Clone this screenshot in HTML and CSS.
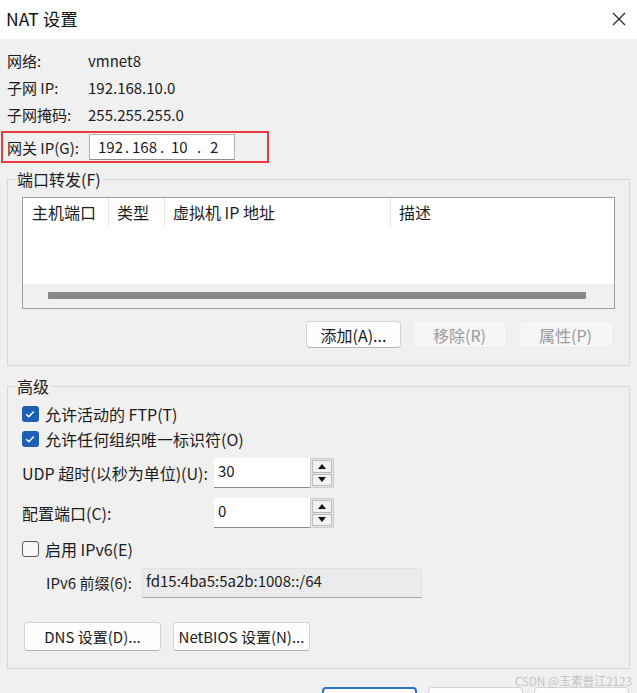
FILE: index.html
```html
<!DOCTYPE html>
<html lang="zh-CN">
<head>
<meta charset="utf-8">
<title>NAT 设置</title>
<link rel="stylesheet" href="styles.css">
</head>
<body>
<div class="dialog">
  <header class="titlebar">
    <span class="title">NAT 设置</span>
    <svg class="close" width="14" height="14" viewBox="0 0 14 14"><path d="M1 1L13 13M13 1L1 13" stroke="#2b2b2b" stroke-width="1.3" fill="none"/></svg>
  </header>
  <main class="content">
    <div class="row"><span class="lbl">网络:</span><span class="val">vmnet8</span></div>
    <div class="row"><span class="lbl">子网 IP:</span><span class="val">192.168.10.0</span></div>
    <div class="row"><span class="lbl">子网掩码:</span><span class="val">255.255.255.0</span></div>
    <div class="gw">
      <span class="gwlbl">网关 IP(G):</span>
      <div class="ipbox">
        <span>192</span><span>.</span><span>168</span><span>.</span><span>10</span><span>.</span><span>2</span>
      </div>
    </div>

    <fieldset class="group pf">
      <legend>端口转发(F)</legend>
      <div class="table">
        <div class="thead">
          <div class="th first">主机端口</div>
          <div class="th">类型</div>
          <div class="th">虚拟机 IP 地址</div>
          <div class="th">描述</div>
        </div>
        <div class="tbody"></div>
        <div class="hscroll"><div class="thumb"></div></div>
      </div>
      <div class="btnrow">
        <button class="btn">添加(A)...</button>
        <button class="btn disabled">移除(R)</button>
        <button class="btn disabled">属性(P)</button>
      </div>
    </fieldset>

    <fieldset class="group adv">
      <legend>高级</legend>
      <div class="check">
        <span class="box on"><svg width="16" height="16" viewBox="0 0 16 16"><path d="M4.2 8.3L6.8 10.8L11.8 5.4" stroke="#fff" stroke-width="1.4" fill="none"/></svg></span>
        <span>允许活动的 FTP(T)</span>
      </div>
      <div class="check">
        <span class="box on"><svg width="16" height="16" viewBox="0 0 16 16"><path d="M4.2 8.3L6.8 10.8L11.8 5.4" stroke="#fff" stroke-width="1.4" fill="none"/></svg></span>
        <span>允许任何组织唯一标识符(O)</span>
      </div>
      <div class="spinrow udp">
        <span class="slbl">UDP 超时(以秒为单位)(U):</span>
        <div class="spin">
          <div class="sfield">30</div>
          <div class="arrows">
            <div class="arrow"><svg width="8" height="5" viewBox="0 0 8 5"><path d="M0 5L4 0L8 5Z" fill="#111"/></svg></div>
            <div class="arrow"><svg width="8" height="5" viewBox="0 0 8 5"><path d="M0 0L8 0L4 5Z" fill="#111"/></svg></div>
          </div>
        </div>
      </div>
      <div class="spinrow cfg">
        <span class="slbl">配置端口(C):</span>
        <div class="spin">
          <div class="sfield">0</div>
          <div class="arrows">
            <div class="arrow"><svg width="8" height="5" viewBox="0 0 8 5"><path d="M0 5L4 0L8 5Z" fill="#111"/></svg></div>
            <div class="arrow"><svg width="8" height="5" viewBox="0 0 8 5"><path d="M0 0L8 0L4 5Z" fill="#111"/></svg></div>
          </div>
        </div>
      </div>
      <div class="check v6">
        <span class="box off"></span>
        <span>启用 IPv6(E)</span>
      </div>
      <div class="prefixrow">
        <span class="plbl">IPv6 前缀(6):</span>
        <div class="pfield">fd15:4ba5:5a2b:1008::/64</div>
      </div>
      <div class="dnsrow">
        <button class="btn wide">DNS 设置(D)...</button>
        <button class="btn wide">NetBIOS 设置(N)...</button>
      </div>
    </fieldset>
  </main>
  <footer class="actions">
    <button class="btn foot primary" aria-label="确定"></button>
    <button class="btn foot" aria-label="取消"></button>
    <button class="btn foot" aria-label="帮助"></button>
  </footer>
  <div class="watermark">CSDN @玉素普江2123</div>
</div>
</body>
</html>
```

FILE: styles.css
```css
* { box-sizing: border-box; }
html, body { margin: 0; padding: 0; }
body {
  width: 637px;
  height: 693px;
  overflow: hidden;
  background: #f0f0f0;
  font-family: "Noto Sans CJK SC", "Noto Sans", sans-serif;
  color: #1c1c1c;
}
.dialog { position: relative; height: 693px; }

.titlebar {
  height: 39px;
  background: #ffffff;
  display: flex;
  align-items: center;
  justify-content: space-between;
  padding: 0 11px 2px 6px;
}
.title { font-size: 17.5px; line-height: 20px; color: #111; }
.close { display: block; }

.content { padding: 8px 7px 0; }

.row {
  display: flex;
  align-items: center;
  height: 27px;
  font-size: 15px;
  line-height: 20px;
}
.lbl { width: 81px; }

.gw {
  margin: 3px 0 0 -6px;
  width: 268px;
  height: 32px;
  border: 2px solid #ea3a3f;
  display: flex;
  align-items: center;
  padding-left: 4px;
  font-size: 15px;
}
.gwlbl { width: 82px; }
.ipbox {
  width: 146px;
  height: 26px;
  background: #fff;
  border: 1px solid #b4b4b4;
  border-bottom-color: #8d8d8d;
  display: grid;
  grid-template-columns: 27px 7px 28px 11px 26px 13px 1fr;
  align-items: center;
  padding-left: 8px;
  font-size: 15px;
  line-height: 20px;
}

.group {
  margin: 6px 0 0;
  border: 1px solid #d6d6d6;
  min-width: 0;
}
.group legend {
  font-size: 16px;
  line-height: 20px;
  padding: 0 2px;
  margin-left: -7px;
}
.pf { padding: 8px 14px 17px; }

.table {
  height: 112px;
  border: 1px solid #9c9ca4;
  background: #fff;
  display: flex;
  flex-direction: column;
}
.thead {
  display: grid;
  grid-template-columns: 85px 56px 226px 1fr;
  height: 29px;
  flex: none;
}
.th {
  font-size: 16px;
  line-height: 28px;
  padding-left: 8px;
  border-left: 1px solid #e6e6e6;
}
.th.first { border-left: none; padding-left: 9px; }
.tbody { flex: 1; }
.hscroll {
  height: 24px;
  flex: none;
  background: #f0f0f0;
  padding: 8px 28px 0 25px;
}
.thumb { height: 7px; background: #878787; border-radius: 1px; }

.btnrow {
  display: flex;
  justify-content: flex-end;
  gap: 11px;
  margin-top: 12px;
  padding-right: 2px;
}
.btn {
  font-family: inherit;
  font-size: 16px;
  color: #1c1c1c;
  width: 95px;
  height: 27px;
  padding: 0;
  background: #fdfdfd;
  border: 1px solid #d3d3d3;
  border-bottom-color: #b4b4b4;
  border-radius: 4px;
  display: flex;
  align-items: center;
  justify-content: center;
  line-height: 20px;
}
.btn.disabled {
  background: #f6f6f6;
  border-color: #ececec;
  color: #9c9c9c;
}

.adv { margin-top: 10px; padding: 5px 14px 17px; }

.check {
  display: flex;
  align-items: center;
  gap: 6px;
  height: 25px;
  font-size: 16px;
  line-height: 20px;
}
.box {
  width: 17px;
  height: 16px;
  border-radius: 3px;
  display: block;
  flex: none;
}
.box svg { display: block; }
.box.on { background: #1e5fb6; }
.box.off { border: 1.5px solid #5c5c5c; background: #f8f8f8; }

.spinrow {
  display: flex;
  align-items: center;
  height: 30px;
  font-size: 16px;
  line-height: 20px;
}
.udp { margin-top: 7px; }
.cfg { margin-top: 10px; }
.slbl { width: 192px; }
.spin { display: flex; height: 30px; }
.sfield {
  width: 96px;
  height: 30px;
  background: #fff;
  border-bottom: 1px solid #8a8a8a;
  padding: 3px 0 0 4px;
  font-size: 15px;
  line-height: 20px;
}
.arrows {
  width: 24px;
  height: 30px;
  border: 1px solid #cfcfcf;
  background: #e4e4e4;
  padding: 1px;
  display: flex;
  flex-direction: column;
  gap: 1px;
}
.arrow {
  flex: 1;
  background: #f1f1f1;
  border: 1px solid #bcbcbc;
  display: flex;
  align-items: center;
  justify-content: center;
}
.arrow svg { display: block; }

.v6 { margin-top: 8px; }

.prefixrow {
  display: flex;
  align-items: center;
  margin-top: 7px;
  height: 30px;
  font-size: 15px;
  line-height: 20px;
}
.plbl { margin-left: 24px; width: 96px; }
.pfield {
  width: 280px;
  height: 30px;
  background: #ebebeb;
  border: 1px solid #e2e2e2;
  border-bottom: 1px solid #a9a9a9;
  padding: 2px 0 0 3px;
}

.dnsrow {
  display: flex;
  gap: 12px;
  margin-top: 24px;
  padding-left: 2px;
}
.btn.wide { width: 137px; height: 29px; font-size: 15px; }

.actions {
  display: flex;
  justify-content: flex-end;
  gap: 11px;
  padding-right: 8px;
  margin-top: 18px;
}
.btn.foot { width: 95px; height: 30px; font-size: 15px; }
.btn.primary { border: 2px solid #2d74c9; }

.watermark {
  position: absolute;
  right: 5px;
  top: 673px;
  font-size: 12px;
  line-height: 16px;
  color: #c6c6c6;
  letter-spacing: -0.2px;
}
```
